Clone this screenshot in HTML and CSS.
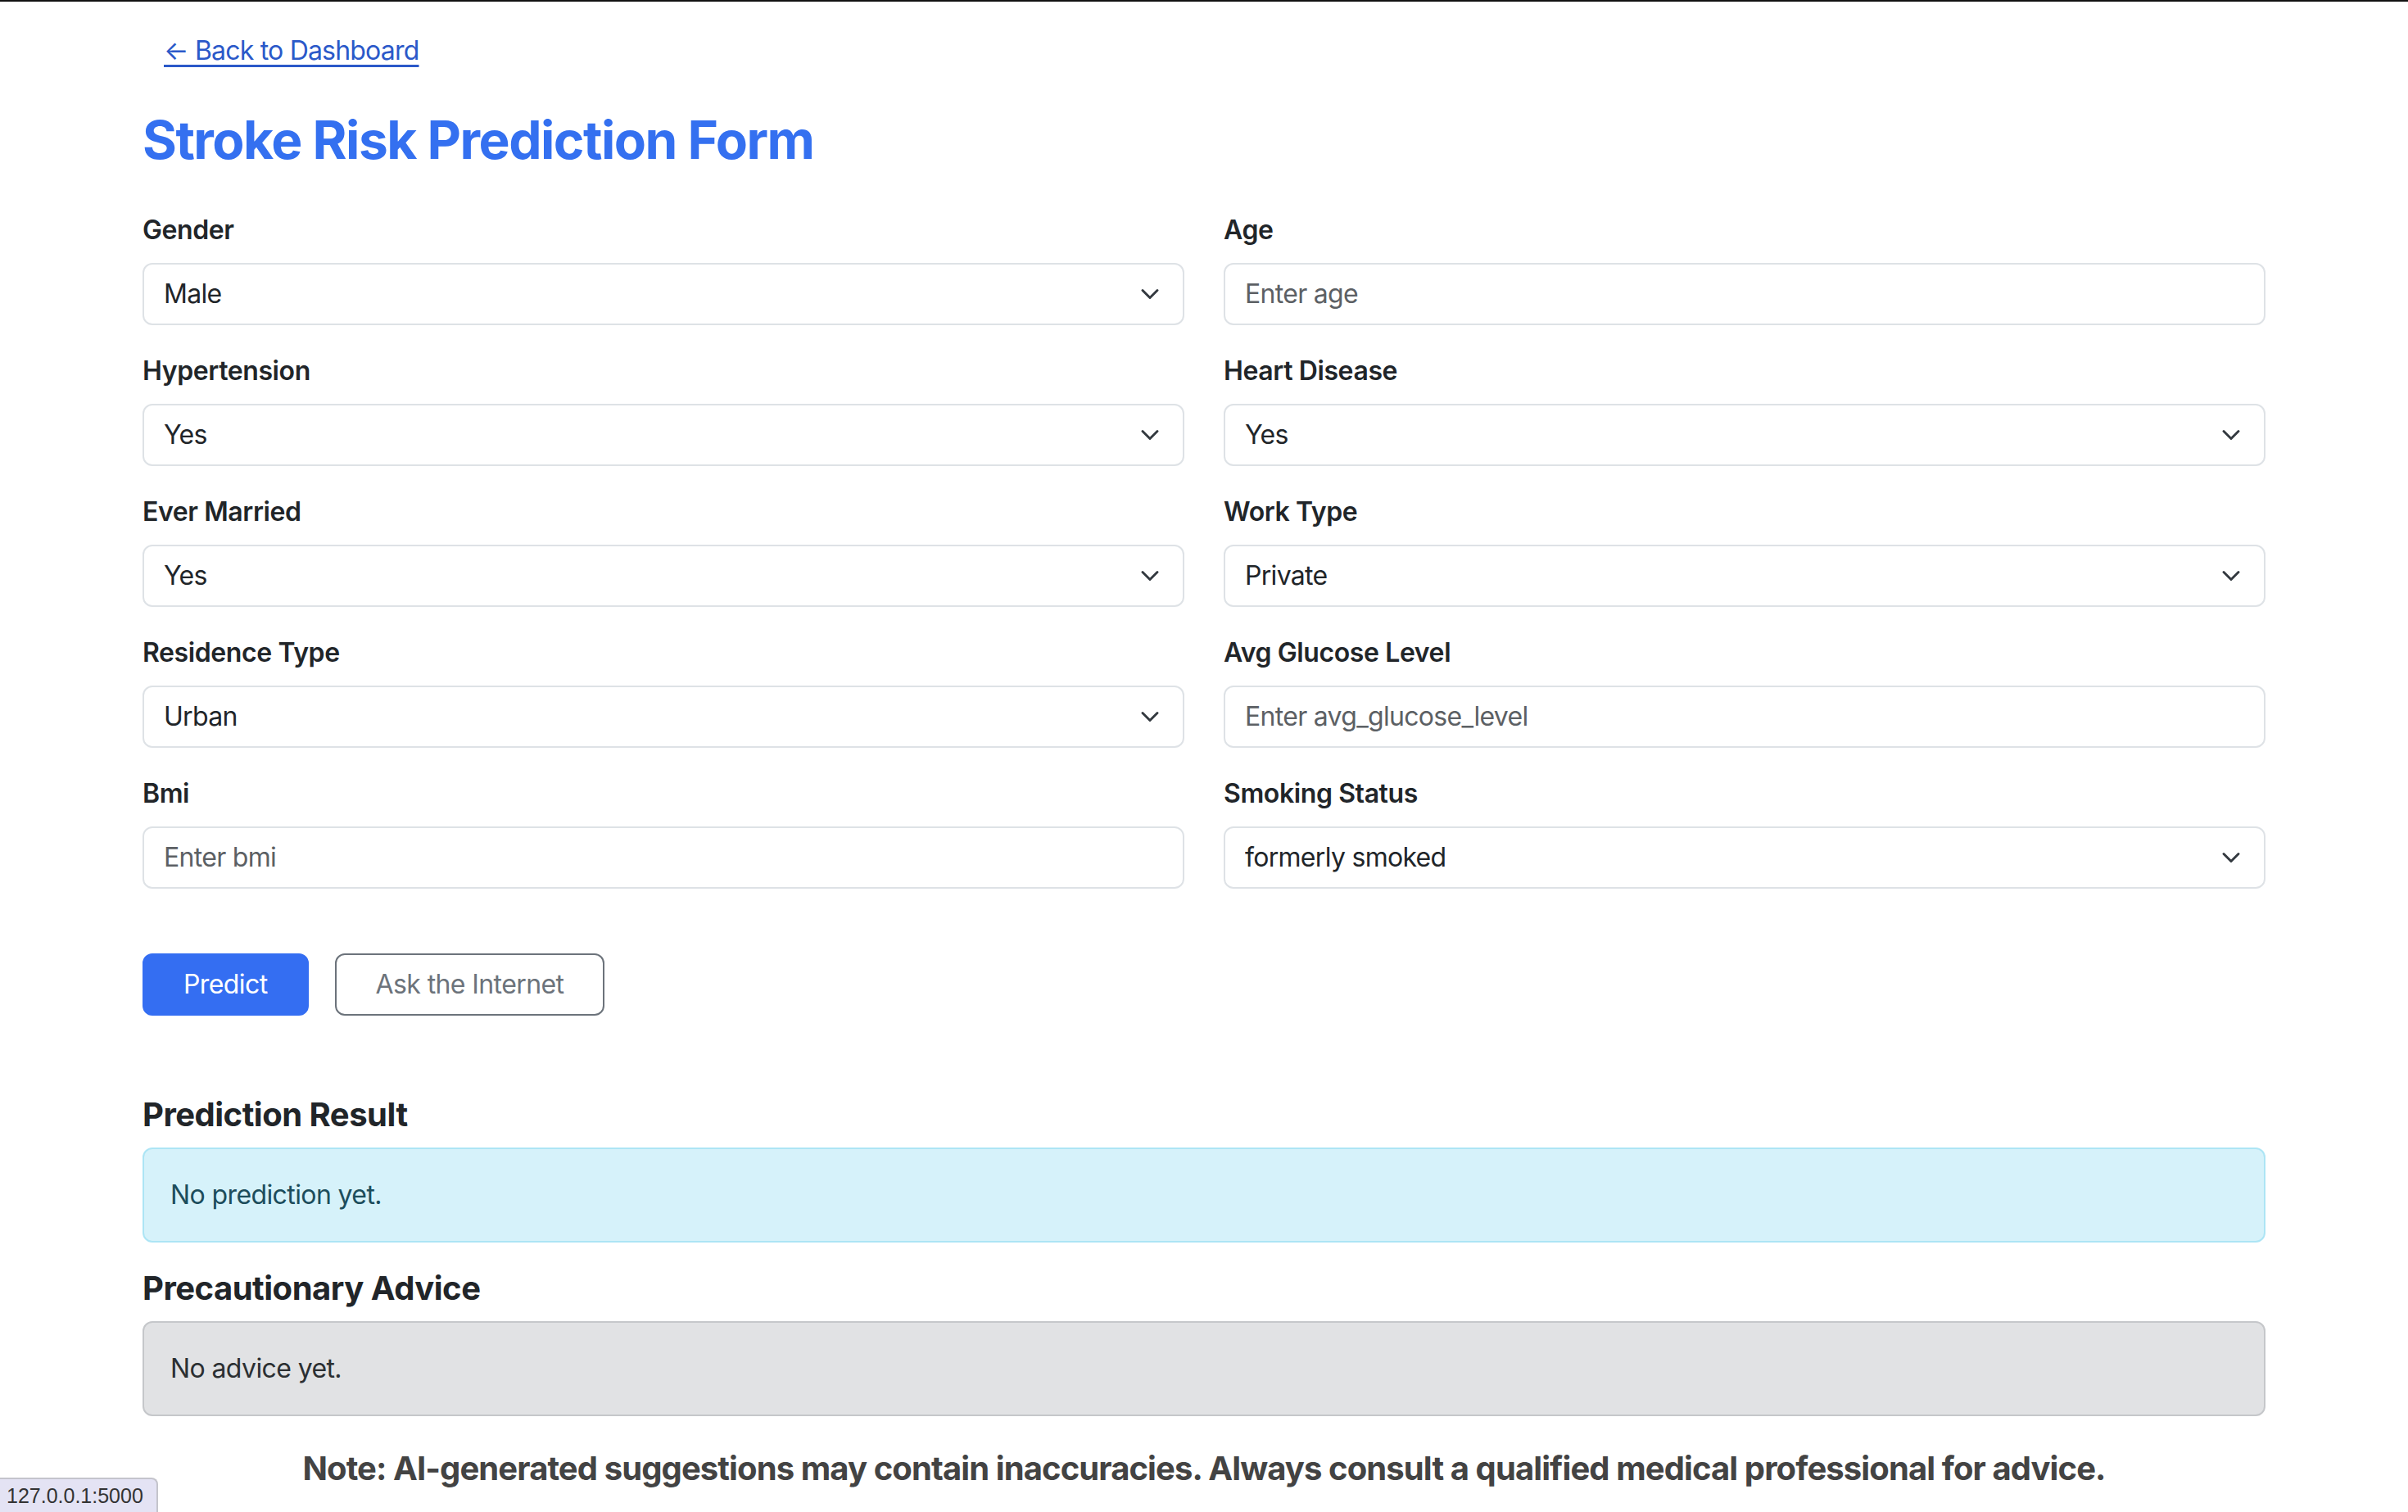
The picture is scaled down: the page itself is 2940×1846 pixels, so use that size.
FILE: index.html
```html
<!DOCTYPE html>
<html lang="en">
<head>
<meta charset="utf-8">
<title>Stroke Risk Prediction Form</title>
<link rel="stylesheet" href="styles.css">
</head>
<body>
<div class="container">
  <div class="back-row">
    <a class="back-link" href="#">&larr; Back to Dashboard</a>
  </div>
  <h2 class="page-title">Stroke Risk Prediction Form</h2>

  <form class="form-grid">
    <div class="field">
      <label class="form-label">Gender</label>
      <div class="select-wrap">
        <select class="form-select"><option>Male</option><option>Female</option></select>
        <svg class="chev" viewBox="0 0 16 16"><path d="m2 5 6 6 6-6"/></svg>
      </div>
    </div>
    <div class="field">
      <label class="form-label">Age</label>
      <input class="form-control" type="text" placeholder="Enter age">
    </div>

    <div class="field">
      <label class="form-label">Hypertension</label>
      <div class="select-wrap">
        <select class="form-select"><option>Yes</option><option>No</option></select>
        <svg class="chev" viewBox="0 0 16 16"><path d="m2 5 6 6 6-6"/></svg>
      </div>
    </div>
    <div class="field">
      <label class="form-label">Heart Disease</label>
      <div class="select-wrap">
        <select class="form-select"><option>Yes</option><option>No</option></select>
        <svg class="chev" viewBox="0 0 16 16"><path d="m2 5 6 6 6-6"/></svg>
      </div>
    </div>

    <div class="field">
      <label class="form-label">Ever Married</label>
      <div class="select-wrap">
        <select class="form-select"><option>Yes</option><option>No</option></select>
        <svg class="chev" viewBox="0 0 16 16"><path d="m2 5 6 6 6-6"/></svg>
      </div>
    </div>
    <div class="field">
      <label class="form-label">Work Type</label>
      <div class="select-wrap">
        <select class="form-select"><option>Private</option><option>Self-employed</option></select>
        <svg class="chev" viewBox="0 0 16 16"><path d="m2 5 6 6 6-6"/></svg>
      </div>
    </div>

    <div class="field">
      <label class="form-label">Residence Type</label>
      <div class="select-wrap">
        <select class="form-select"><option>Urban</option><option>Rural</option></select>
        <svg class="chev" viewBox="0 0 16 16"><path d="m2 5 6 6 6-6"/></svg>
      </div>
    </div>
    <div class="field">
      <label class="form-label">Avg Glucose Level</label>
      <input class="form-control" type="text" placeholder="Enter avg_glucose_level">
    </div>

    <div class="field">
      <label class="form-label">Bmi</label>
      <input class="form-control" type="text" placeholder="Enter bmi">
    </div>
    <div class="field">
      <label class="form-label">Smoking Status</label>
      <div class="select-wrap">
        <select class="form-select"><option>formerly smoked</option><option>never smoked</option></select>
        <svg class="chev" viewBox="0 0 16 16"><path d="m2 5 6 6 6-6"/></svg>
      </div>
    </div>
  </form>

  <div class="actions">
    <button class="btn btn-primary" type="button">Predict</button>
    <button class="btn btn-outline" type="button">Ask the Internet</button>
  </div>

  <h5 class="section-title first">Prediction Result</h5>
  <div class="alert alert-info">No prediction yet.</div>

  <h5 class="section-title">Precautionary Advice</h5>
  <div class="alert alert-secondary">No advice yet.</div>

  <p class="note">Note: AI-generated suggestions may contain inaccuracies. Always consult a qualified medical professional for advice.</p>
</div>

<div class="status-url">127.0.0.1:5000</div>
</body>
</html>
```

FILE: styles.css
```css
html, body {
  margin: 0;
  padding: 0;
}

body {
  border-top: 2px solid #111;
  background: #fff;
  color: #212529;
  font-family: Inter, "Noto Sans", "Liberation Sans", sans-serif;
  font-size: 32px;
  line-height: 48px;
  letter-spacing: -0.6px;
}

.container {
  width: 2592px;
  margin: 0 auto;
}

.back-row {
  padding-top: 22px;
}

.back-link {
  display: inline-block;
  padding: 12px 24px;
  border: 2px solid transparent;
  color: #2b59c9;
  text-decoration: underline;
  text-decoration-thickness: 3px;
  text-underline-offset: 6px;
  font-size: 32px;
  line-height: 48px;
  letter-spacing: -0.8px;
}

.page-title {
  margin: 33px 0 47px;
  color: #3470f0;
  font-size: 64px;
  line-height: 76.8px;
  font-weight: 700;
  letter-spacing: -1.5px;
}

.form-grid {
  display: grid;
  grid-template-columns: 1fr 1fr;
  column-gap: 48px;
  row-gap: 32px;
}

.field {
  display: flex;
  flex-direction: column;
}

.form-label {
  display: block;
  margin-bottom: 16px;
  font-weight: 600;
  font-size: 32px;
  line-height: 48px;
  letter-spacing: -0.4px;
  color: #212529;
}

.select-wrap {
  position: relative;
}

.form-select,
.form-control {
  display: block;
  box-sizing: border-box;
  width: 100%;
  height: 76px;
  margin: 0;
  padding: 12px 24px;
  border: 2px solid #dee2e6;
  border-radius: 12px;
  background: #fff;
  color: #212529;
  font-family: inherit;
  font-size: 32px;
  line-height: 48px;
  letter-spacing: -0.7px;
  -webkit-appearance: none;
  appearance: none;
  outline: none;
}

.form-select {
  padding-right: 80px;
}

.form-control::placeholder {
  color: #5c6064;
  opacity: 1;
}

.chev {
  position: absolute;
  right: 30px;
  top: 50%;
  width: 24px;
  height: 24px;
  margin-top: -12px;
  fill: none;
  stroke: #343a40;
  stroke-width: 2;
  stroke-linecap: round;
  stroke-linejoin: round;
  pointer-events: none;
}

.actions {
  display: flex;
  gap: 32px;
  margin-top: 79px;
}

.btn {
  box-sizing: border-box;
  height: 76px;
  padding: 12px 48px;
  border: 2px solid transparent;
  border-radius: 12px;
  font-family: inherit;
  font-size: 32px;
  line-height: 48px;
  font-weight: 400;
  letter-spacing: -0.6px;
  cursor: pointer;
}

.btn-primary {
  background: #346ef2;
  border-color: #346ef2;
  color: #fff;
}

.btn-outline {
  background: #fff;
  border-color: #6c737b;
  color: #6c737b;
}

.section-title {
  margin: 32px 0 16px;
  font-size: 40px;
  line-height: 48px;
  font-weight: 700;
  color: #212529;
  letter-spacing: -0.5px;
}

.section-title.first {
  margin-top: 97px;
}

.alert {
  box-sizing: border-box;
  height: 116px;
  padding: 32px;
  border: 2px solid transparent;
  border-radius: 12px;
  font-size: 32px;
  line-height: 48px;
}

.alert-info {
  background: #d6f2fa;
  border-color: #ade5f5;
  color: #1c4d5c;
}

.alert-secondary {
  background: #e1e2e4;
  border-color: #c5c7ca;
  color: #2b2f32;
}

.note {
  margin: 40px 0 0;
  text-align: center;
  font-size: 40px;
  line-height: 48px;
  font-weight: 700;
  letter-spacing: -0.9px;
  color: #434343;
}

.status-url {
  position: fixed;
  left: 0;
  bottom: 0;
  box-sizing: border-box;
  width: 193px;
  height: 42px;
  padding: 0 8px;
  background: #e4e3f4;
  border: 2px solid #c4c4cc;
  border-left: none;
  border-bottom: none;
  border-top-right-radius: 8px;
  font-family: "Liberation Sans", Arial, sans-serif;
  font-size: 25px;
  line-height: 40px;
  letter-spacing: 0;
  color: #333;
}
```
